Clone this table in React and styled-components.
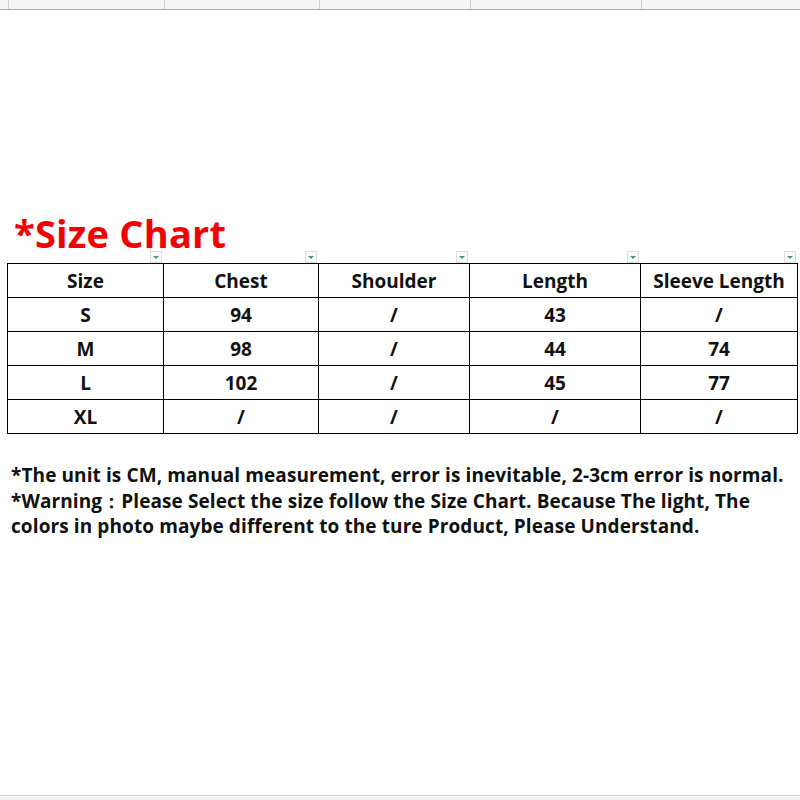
import React from 'react';
import styled, { createGlobalStyle } from 'styled-components';

const GlobalStyle = createGlobalStyle`
  html, body {
    margin: 0;
    padding: 0;
    background: #fff;
  }
  body {
    font-family: "Open Sans", Lato, "Liberation Sans", sans-serif;
  }
`;

const columns = '156px 155px 151px 171px 157px';

const headers = ['Size', 'Chest', 'Shoulder', 'Length', 'Sleeve Length'];
const rows = [
    ['S', '94', '/', '43', '/'],
    ['M', '98', '/', '44', '74'],
    ['L', '102', '/', '45', '77'],
    ['XL', '/', '/', '/', '/'],
];

const Page = styled.div`
    width: 800px;
    height: 800px;
    display: flex;
    flex-direction: column;
    overflow: hidden;
`;

const TopStrip = styled.div`
    height: 9px;
    display: grid;
    grid-template-columns: 8px ${columns};
    background: #f4f4f4;
    border-bottom: 1px solid #a9a9a9;
`;

const StripCell = styled.div`
    border-left: ${p => (p.first ? 'none' : '1px solid #cfcfcf')};
`;

const Sheet = styled.div`
    margin-top: 206px;
    padding-left: 7px;
`;

const Title = styled.h1`
    margin: 0 0 0 7px;
    height: 34px;
    font-family: "Open Sans", Lato, "Liberation Sans", sans-serif;
    font-weight: 700;
    font-size: 38px;
    line-height: 34px;
    color: #f20000;
    letter-spacing: 0.2px;
`;

const FilterRow = styled.div`
    display: grid;
    grid-template-columns: ${columns};
    height: 14px;
    margin-top: -1px;
`;

const FilterCell = styled.div`
    display: flex;
    justify-content: flex-end;
    align-items: flex-start;
    padding-right: 1px;
`;

const FilterBtn = styled.div`
    width: 10px;
    height: 10px;
    margin-top: 2px;
    border: 1px solid #dedede;
    background: #fafafa;
    display: flex;
    align-items: center;
    justify-content: center;
    &::after {
        content: '';
        border-left: 3px solid transparent;
        border-right: 3px solid transparent;
        border-top: 3px solid #3d9c80;
    }
`;

const Table = styled.table`
    border-collapse: collapse;
    table-layout: fixed;
    width: 791px;
`;

const Cell = styled.td`
    border: 1px solid #000;
    height: 33px;
    padding: 0;
    text-align: center;
    font-family: "Open Sans", Lato, "Liberation Sans", sans-serif;
    font-weight: 700;
    font-size: 19px;
    color: #111;
    vertical-align: middle;
`;

const Notes = styled.div`
    margin-top: 29px;
    padding-left: 11px;
    font-family: "Open Sans", Lato, "Liberation Sans", sans-serif;
    font-weight: 700;
    font-size: 19px;
    line-height: 25.5px;
    letter-spacing: 0.1px;
    color: #111;
    white-space: nowrap;
`;

const Spacer = styled.div`
    flex: 1;
`;

const BottomStrip = styled.div`
    height: 4px;
    border-top: 1px solid #d6d6d6;
    background: #f4f4f4;
`;

const App = () => {
    const widths = [156, 155, 151, 171, 157];
    return (
        <>
            <GlobalStyle />
            <Page>
                <TopStrip>
                    <StripCell first />
                    {widths.map((w, i) => <StripCell key={i} />)}
                </TopStrip>
                <Sheet>
                    <Title>*Size Chart</Title>
                    <FilterRow>
                        {headers.map(h => (
                            <FilterCell key={h}><FilterBtn /></FilterCell>
                        ))}
                    </FilterRow>
                    <Table>
                        <colgroup>
                            {widths.map((w, i) => <col key={i} style={{ width: w }} />)}
                        </colgroup>
                        <tbody>
                            <tr>
                                {headers.map(h => <Cell key={h}>{h}</Cell>)}
                            </tr>
                            {rows.map(r => (
                                <tr key={r[0]}>
                                    {r.map((v, i) => <Cell key={i}>{v}</Cell>)}
                                </tr>
                            ))}
                        </tbody>
                    </Table>
                </Sheet>
                <Notes>
                    <div>*The unit is CM, manual measurement, error is inevitable, 2-3cm error is normal.</div>
                    <div>*Warning：Please Select the size follow the Size Chart. Because The light, The</div>
                    <div>colors in photo maybe different to the ture Product, Please Understand.</div>
                </Notes>
                <Spacer />
                <BottomStrip />
            </Page>
        </>
    );
};

export default App;
